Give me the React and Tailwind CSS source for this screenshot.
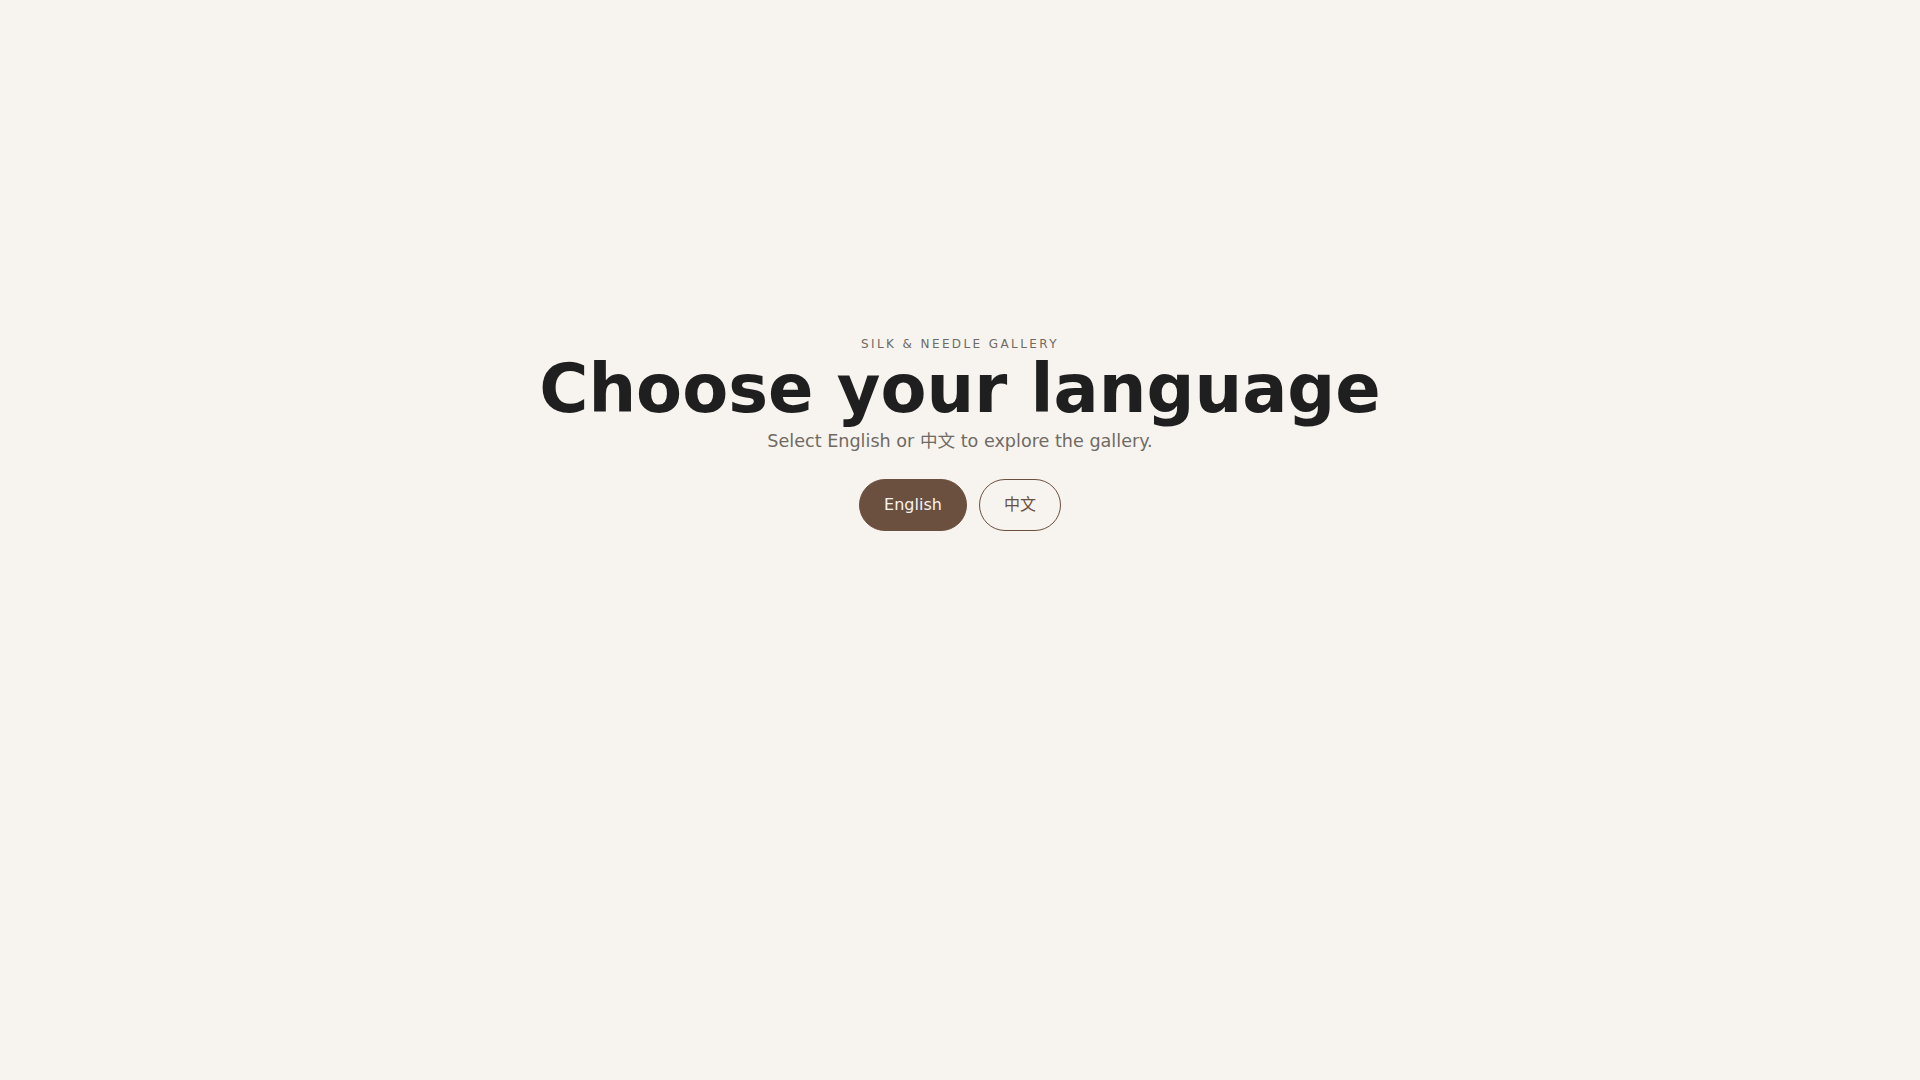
import { useState } from "react";

const LanguageGate = () => {
  const [lang, setLang] = useState("en");

  const btnBase =
    "rounded-full border px-6 py-[13px] text-base leading-6 transition-colors";

  return (
    <div
      className="min-h-screen bg-[#f7f4ef] flex flex-col items-center justify-center pb-[213px]"
      style={{ fontFamily: '"DejaVu Sans", "Noto Sans CJK SC", sans-serif' }}
    >
      {/* eyebrow */}
      <p className="text-xs leading-4 uppercase tracking-[0.2em] text-[#6f6a64]">
        Silk &amp; Needle Gallery
      </p>

      {/* title */}
      <h1 className="mt-[1px] text-[67px] leading-[1.1] font-bold text-[#1f1f1f]">
        Choose your language
      </h1>

      <p className="mt-[1px] text-[17.6px] leading-7 text-[#6f6a64]">
        Select English or 中文 to explore the gallery.
      </p>

      {/* language buttons */}
      <div className="mt-6 flex items-center gap-3">
        <button
          onClick={() => setLang("en")}
          className={`${btnBase} border-[#6b5040] bg-[#6b5040] text-[#f7f4ef]`}
        >
          English
        </button>
        <button
          onClick={() => setLang("zh")}
          className={`${btnBase} border-[#6b5040] bg-transparent text-[#6b5040]`}
        >
          中文
        </button>
      </div>
    </div>
  );
};

export default function App() {
  return <LanguageGate />;
}
